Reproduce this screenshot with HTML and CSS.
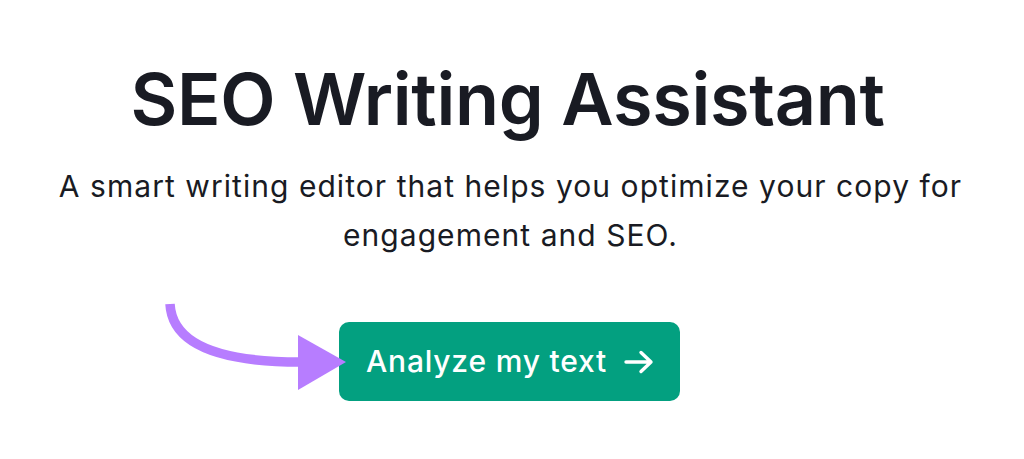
FILE: index.html
```html
<!DOCTYPE html>
<html lang="en">
<head>
<meta charset="utf-8">
<title>SEO Writing Assistant</title>
<link rel="stylesheet" href="styles.css">
</head>
<body>
<main class="hero">
  <h1 class="title">SEO Writing Assistant</h1>
  <p class="subtitle">A smart writing editor that helps you optimize your copy for<br>engagement and SEO.</p>
  <div class="cta">
    <svg class="pointer" width="190" height="100" viewBox="0 0 190 100" aria-hidden="true">
      <path d="M10 9 C12 45 50 67 140 67" fill="none" stroke="#b77dff" stroke-width="9.5"/>
      <polygon points="138,40 138,95 186,67" fill="#b77dff"/>
    </svg>
    <a class="button" href="#">Analyze my text
      <svg class="button-arrow" width="30" height="24" viewBox="0 0 30 24" aria-hidden="true">
        <path d="M2 12 H27 M17 2.5 L27 12 L17 21.5" fill="none" stroke="#fff" stroke-width="3.4" stroke-linecap="round" stroke-linejoin="round"/>
      </svg>
    </a>
  </div>
</main>
</body>
</html>
```
FILE: styles.css
```css
html, body {
  margin: 0;
  padding: 0;
  background: #ffffff;
}
body {
  font-family: Inter, "Noto Sans", sans-serif;
  color: #191b23;
}
.hero {
  display: flex;
  flex-direction: column;
  align-items: center;
  padding-top: 55px;
  text-align: center;
}
.title {
  margin: 0 0 0 -9px;
  font-size: 72px;
  line-height: 88px;
  font-weight: 600;
  letter-spacing: -0.3px;
}
.subtitle {
  margin: 19px 0 0 -3px;
  font-size: 30px;
  line-height: 49px;
  font-weight: 400;
  letter-spacing: 1.05px;
}
.cta {
  position: relative;
  margin-top: 62px;
  margin-left: -5px;
}
.button {
  display: flex;
  align-items: center;
  gap: 17px;
  box-sizing: border-box;
  width: 341px;
  height: 79px;
  padding: 0 24px 0 27px;
  background: #03a080;
  border-radius: 10px;
  color: #ffffff;
  text-decoration: none;
  font-size: 30px;
  line-height: 79px;
  font-weight: 500;
  letter-spacing: 0.8px;
}
.button-arrow {
  flex: none;
}
.pointer {
  position: absolute;
  left: -179px;
  top: -27px;
  z-index: 2;
}
```
